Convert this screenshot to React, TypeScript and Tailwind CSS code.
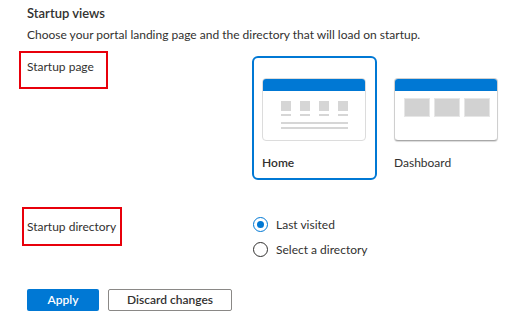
import React from 'react';

const Radio: React.FC<{ checked?: boolean; label: string }> = ({ checked, label }) => (
  <label className="flex h-[25px] items-center gap-[8px]">
    <span
      className={
        checked
          ? 'flex h-[15px] w-[15px] items-center justify-center rounded-full border border-[#0078d4]'
          : 'flex h-[15px] w-[15px] items-center justify-center rounded-full border border-[#323130]'
      }
    >
      {checked && <span className="h-[7px] w-[7px] rounded-full bg-[#0078d4]" />}
    </span>
    <span className="text-[12px] leading-[18px]">{label}</span>
  </label>
);

const HomeMock = () => (
  <div className="h-[63px] w-[104px] overflow-hidden rounded-[4px] border border-[#dcdcdc] bg-white">
    <div className="h-[12px] bg-[#0078d4]" />
    <div className="flex gap-[9px] pl-[18px] pt-[10px]">
      {[0, 1, 2, 3].map((i) => (
        <div key={i} className="flex flex-col gap-[3px]">
          <div className="h-[10px] w-[10px] bg-[#d6d6d6]" />
          <div className="h-[2px] w-[10px] bg-[#d6d6d6]" />
        </div>
      ))}
    </div>
    <div className="ml-[18px] mt-[6px] h-[2px] w-[67px] bg-[#d6d6d6]" />
    <div className="ml-[18px] mt-[3px] h-[2px] w-[67px] bg-[#d6d6d6]" />
  </div>
);

const DashMock = () => (
  <div className="h-[63px] w-[104px] overflow-hidden rounded-[4px] border border-[#cfcfcf] border-b-[#a8a8a8] bg-white shadow-[0_1px_1px_rgba(0,0,0,0.15)]">
    <div className="h-[12px] bg-[#0078d4]" />
    <div className="flex gap-[4px] pl-[9px] pt-[7px]">
      {[0, 1, 2].map((i) => (
        <div key={i} className="h-[19px] w-[26px] border border-[#e6e6e6] bg-[#d2d2d2]" />
      ))}
    </div>
  </div>
);

export default function App() {
  return (
    <div
      className="h-[320px] w-[506px] overflow-hidden bg-white pl-[27px] text-[#323130]"
      style={{ fontFamily: 'Lato, "Open Sans", sans-serif' }}
    >
      <h2 className="pt-[3px] text-[13px] font-semibold leading-[20px]">Startup views</h2>
      <p className="mt-[3px] text-[12px] leading-[18px]">
        Choose your portal landing page and the directory that will load on startup.
      </p>

      <div className="mt-[7px] flex items-start">
        <div className="w-[225px] shrink-0">
          <div className="-ml-[8px] h-[38px] w-[89px] border-2 border-[#e8000b] pl-[6px] pt-[5px] text-[12px] leading-[18px]">
            Startup page
          </div>
        </div>
        <div className="mt-[5px] flex shrink-0 gap-[7px]">
          <div className="h-[124px] w-[125px] rounded-[6px] border-2 border-[#0078d4] pl-[8px] pt-[20px]">
            <HomeMock />
            <div className="mt-[13px] text-[12px] font-semibold leading-[18px]">Home</div>
          </div>
          <div className="h-[124px] w-[125px] rounded-[6px] border-2 border-transparent pl-[8px] pt-[20px]">
            <DashMock />
            <div className="mt-[13px] text-[12px] leading-[18px]">Dashboard</div>
          </div>
        </div>
      </div>

      <div className="mt-[27px] flex items-start">
        <div className="w-[226px] shrink-0">
          <div className="-ml-[5px] h-[39px] w-[100px] whitespace-nowrap border-2 border-[#e8000b] pl-[3px] pt-[9px] text-[12px] leading-[18px]">
            Startup directory
          </div>
        </div>
        <div className="mt-[5px] flex flex-col">
          <Radio checked label="Last visited" />
          <Radio label="Select a directory" />
        </div>
      </div>

      <div className="mt-[27px] flex gap-[9px]">
        <button className="h-[22px] w-[72px] rounded-[2px] bg-[#0078d4] text-[12px] font-semibold leading-[18px] text-white">
          Apply
        </button>
        <button className="h-[22px] w-[124px] rounded-[2px] border border-[#8a8886] bg-white text-[12px] font-semibold leading-[18px] text-[#323130]">
          Discard changes
        </button>
      </div>
    </div>
  );
}
